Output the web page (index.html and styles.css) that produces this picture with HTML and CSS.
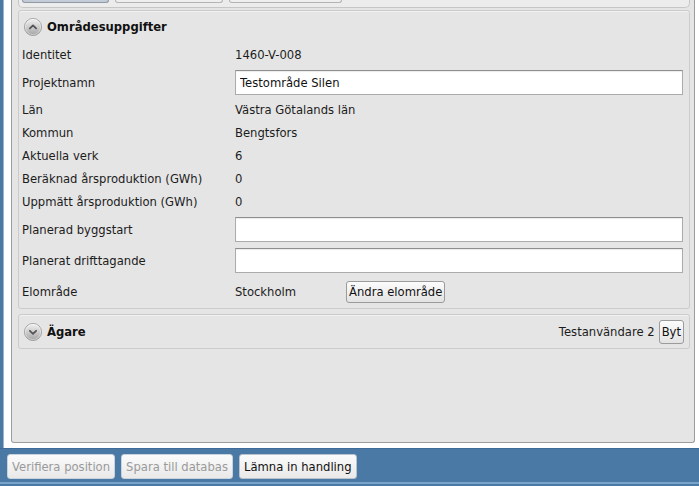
FILE: index.html
```html
<!DOCTYPE html>
<html lang="sv">
<head>
<meta charset="utf-8">
<title>Områdesuppgifter</title>
<link rel="stylesheet" href="styles.css">
</head>
<body>
<div class="app">
  <div class="frame">
    <div class="panel">
      <div class="tabs">
        <span class="tab tab-active"></span>
        <span class="tab tab-second"></span>
        <span class="tab tab-third"></span>
      </div>

      <section class="group">
        <header class="group-head">
          <svg class="toggle" viewBox="0 0 18 18" width="18" height="18">
            <defs>
              <linearGradient id="gA" x1="0" y1="0" x2="0" y2="1">
                <stop offset="0" stop-color="#f2f2f2"/>
                <stop offset="0.5" stop-color="#cdcdcd"/>
                <stop offset="1" stop-color="#a2a2a2"/>
              </linearGradient>
            </defs>
            <circle cx="9" cy="9" r="8.6" fill="url(#gA)" stroke="#9a9a9a" stroke-width="0.8"/>
            <circle cx="9" cy="9" r="7.6" fill="none" stroke="#ffffff" stroke-opacity="0.45" stroke-width="0.8"/>
            <polyline points="5.9,10.4 9,7.4 12.1,10.4" fill="none" stroke="#555555" stroke-width="1.8" stroke-linecap="round" stroke-linejoin="round"/>
          </svg>
          <h2 class="group-title">Områdesuppgifter</h2>
        </header>
        <div class="fields">
          <div class="row row-first"><span class="label">Identitet</span><span class="value">1460-V-008</span></div>
          <div class="row row-input"><span class="label">Projektnamn</span><input class="field" type="text" value="Testområde Silen"></div>
          <div class="row"><span class="label">Län</span><span class="value">Västra Götalands län</span></div>
          <div class="row"><span class="label">Kommun</span><span class="value">Bengtsfors</span></div>
          <div class="row"><span class="label">Aktuella verk</span><span class="value">6</span></div>
          <div class="row"><span class="label">Beräknad årsproduktion (GWh)</span><span class="value">0</span></div>
          <div class="row row-first"><span class="label">Uppmätt årsproduktion (GWh)</span><span class="value">0</span></div>
          <div class="row row-input"><span class="label">Planerad byggstart</span><input class="field" type="text" value=""></div>
          <div class="row row-input"><span class="label">Planerat drifttagande</span><input class="field" type="text" value=""></div>
          <div class="row row-last"><span class="label">Elområde</span><span class="value value-inline"><span class="value-fixed">Stockholm</span><button class="btn" type="button">Ändra elområde</button></span></div>
        </div>
      </section>

      <section class="group owner">
        <header class="group-head">
          <svg class="toggle" viewBox="0 0 18 18" width="18" height="18">
            <defs>
              <linearGradient id="gB" x1="0" y1="0" x2="0" y2="1">
                <stop offset="0" stop-color="#f2f2f2"/>
                <stop offset="0.5" stop-color="#cdcdcd"/>
                <stop offset="1" stop-color="#a2a2a2"/>
              </linearGradient>
            </defs>
            <circle cx="9" cy="9" r="8.6" fill="url(#gB)" stroke="#9a9a9a" stroke-width="0.8"/>
            <circle cx="9" cy="9" r="7.6" fill="none" stroke="#ffffff" stroke-opacity="0.45" stroke-width="0.8"/>
            <polyline points="5.9,7.8 9,10.8 12.1,7.8" fill="none" stroke="#555555" stroke-width="1.8" stroke-linecap="round" stroke-linejoin="round"/>
          </svg>
          <h2 class="group-title">Ägare</h2>
          <span class="owner-name">Testanvändare 2</span>
          <button class="btn btn-small" type="button">Byt</button>
        </header>
      </section>
    </div>
  </div>
  <div class="footer">
    <button class="fbtn" type="button" disabled>Verifiera position</button>
    <button class="fbtn" type="button" disabled>Spara till databas</button>
    <button class="fbtn fbtn-active" type="button">Lämna in handling</button>
  </div>
</div>
</body>
</html>
```

FILE: styles.css
```css
* { box-sizing: border-box; }

html, body {
  margin: 0;
  padding: 0;
  height: 486px;
  overflow: hidden;
  background: #4a79a6;
  font-family: "DejaVu Sans", Verdana, sans-serif;
  font-size: 11.6px;
  color: #1c1c1c;
}

.app {
  display: flex;
  flex-direction: column;
  height: 486px;
}

.frame {
  height: 448px;
  margin-left: 3px;
  background: #ffffff;
  border-left: 1px solid #9fb4c8;
  padding: 0 4px 5px 7px;
  display: flex;
}

.panel {
  flex: 1;
  background: #e5e5e5;
  border: 1px solid #9c9c9c;
  border-top: none;
  border-radius: 0 0 3px 3px;
  padding: 0 4px 0 6px;
}

.tabs {
  height: 8px;
  background: #ececec;
  border: 1px solid #c6c6c6;
  border-top: none;
  border-radius: 0 0 5px 5px;
  display: flex;
  gap: 6px;
  padding-left: 3px;
}

.tab {
  height: 3px;
  background: #efefef;
  border: 1px solid #b4b4b4;
  border-top: none;
  border-radius: 0 0 4px 4px;
}

.tab-active {
  width: 87px;
  background: #c3ccd6;
  border-color: #8f9aa6;
}

.tab-second { width: 108px; }
.tab-third { width: 113px; }

.group {
  margin-top: 2px;
  border: 1px solid #cbcbcb;
  border-radius: 3px;
  background: #e5e5e5;
  box-shadow: inset 0 1px 0 #f2f2f2;
}

.owner {
  margin-top: 5px;
}

.group-head {
  height: 32px;
  display: flex;
  align-items: center;
  padding: 0 5px 0 5px;
}

.owner .group-head {
  height: 33px;
}

.toggle {
  flex: none;
  display: block;
}

.group-title {
  margin: 0 0 0 5px;
  font-size: 11.6px;
  font-weight: bold;
  color: #111111;
}

.owner-name {
  margin-left: auto;
  margin-right: 4px;
}

.row {
  display: grid;
  grid-template-columns: 213px 1fr;
  align-items: center;
  height: 23px;
  padding: 0 6px 0 3px;
}

.row-first { height: 24px; }
.row-input { height: 31px; }
.row-last { height: 32px; }

.value-inline {
  display: flex;
  align-items: center;
}

.value-fixed {
  width: 111px;
}

.field {
  height: 25px;
  width: 100%;
  margin: 0;
  padding: 0 4px;
  border: 1px solid #ababab;
  border-top-color: #8e8e8e;
  background: #ffffff;
  box-shadow: inset 0 1px 1px rgba(0, 0, 0, 0.08);
  font-family: inherit;
  font-size: 11.6px;
  color: #111111;
  outline: none;
}

.btn {
  height: 22px;
  margin: 0;
  padding: 0 2px;
  border: 1px solid #9b9b9b;
  border-radius: 3px;
  background: linear-gradient(#fcfcfc, #e3e3e3);
  font-family: inherit;
  font-size: 11.6px;
  color: #111111;
}

.btn-small {
  height: 24px;
  padding: 0 2px;
}

.footer {
  flex: 1;
  display: flex;
  gap: 6px;
  padding: 5px 0 0 7px;
  border-top: 1px solid #3e6b97;
  background: linear-gradient(#4a79a6 0, #4a79a6 33px, #7aa3c9 33px, #7aa3c9 35px, #4a79a6 35px);
}

.fbtn {
  height: 25px;
  margin: 0;
  padding: 0 4px;
  border: 1px solid #c9d3dc;
  border-radius: 3px;
  background: linear-gradient(#fbfbfb, #e9e9e9);
  font-family: inherit;
  font-size: 11.6px;
  color: #9a9a9a;
}

.fbtn-active {
  color: #111111;
  border-color: #b9c3cc;
}
```
